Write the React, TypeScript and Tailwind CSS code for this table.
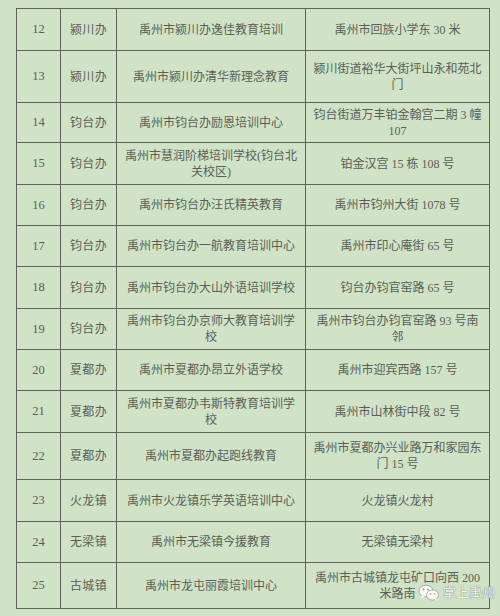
import React from 'react';

type Row = { no: string; area: string; name: string[]; addr: string[]; h: number };

const rows: Row[] = [
  { no: '12', area: '颍川办', name: ['禹州市颍川办逸佳教育培训'], addr: ['禹州市回族小学东 30 米'], h: 42 },
  { no: '13', area: '颍川办', name: ['禹州市颍川办清华新理念教育'], addr: ['颍川街道裕华大街坪山永和苑北', '门'], h: 52 },
  { no: '14', area: '钧台办', name: ['禹州市钧台办励恩培训中心'], addr: ['钧台街道万丰铂金翰宫二期 3 幢', '107'], h: 40 },
  { no: '15', area: '钧台办', name: ['禹州市慧润阶梯培训学校(钧台北', '关校区)'], addr: ['铂金汉宫 15 栋 108 号'], h: 42 },
  { no: '16', area: '钧台办', name: ['禹州市钧台办汪氏精英教育'], addr: ['禹州市钧州大街 1078 号'], h: 41 },
  { no: '17', area: '钧台办', name: ['禹州市钧台办一航教育培训中心'], addr: ['禹州市印心庵街 65 号'], h: 41 },
  { no: '18', area: '钧台办', name: ['禹州市钧台办大山外语培训学校'], addr: ['钧台办钧官窑路 65 号'], h: 42 },
  { no: '19', area: '钧台办', name: ['禹州市钧台办京师大教育培训学', '校'], addr: ['禹州市钧台办钧官窑路 93 号南', '邻'], h: 41 },
  { no: '20', area: '夏都办', name: ['禹州市夏都办昂立外语学校'], addr: ['禹州市迎宾西路 157 号'], h: 41 },
  { no: '21', area: '夏都办', name: ['禹州市夏都办韦斯特教育培训学', '校'], addr: ['禹州市山林街中段 82 号'], h: 42 },
  { no: '22', area: '夏都办', name: ['禹州市夏都办起跑线教育'], addr: ['禹州市夏都办兴业路万和家园东', '门 15 号'], h: 47 },
  { no: '23', area: '火龙镇', name: ['禹州市火龙镇乐学英语培训中心'], addr: ['火龙镇火龙村'], h: 42 },
  { no: '24', area: '无梁镇', name: ['禹州市无梁镇今援教育'], addr: ['无梁镇无梁村'], h: 41 },
  { no: '25', area: '古城镇', name: ['禹州市龙屯丽霞培训中心'], addr: ['禹州市古城镇龙屯矿口向西 200', '米路南'], h: 46 },
];

const cell = 'border border-[#5f625c] text-center align-middle p-0';

function Lines({ lines }: { lines: string[] }) {
  return (
    <div className="flex flex-col items-center leading-[16px]">
      {lines.map((l, i) => (
        <span key={i} className="whitespace-nowrap">{l}</span>
      ))}
    </div>
  );
}

function WeChatMark() {
  return (
    <svg width="22" height="18" viewBox="0 0 22 18">
      <ellipse cx="8" cy="7" rx="7" ry="5.8" fill="#fafcf8" stroke="#9aa096" strokeWidth="0.8" />
      <path d="M4 11.5 L3 14.5 L7 12.5 Z" fill="#fafcf8" />
      <ellipse cx="14.5" cy="11" rx="6" ry="5" fill="#fafcf8" stroke="#9aa096" strokeWidth="0.8" />
      <path d="M17 15 L19 17.5 L18.5 14.5 Z" fill="#fafcf8" />
      <circle cx="5.5" cy="5.5" r="0.9" fill="#8c9288" />
      <circle cx="10" cy="5.5" r="0.9" fill="#8c9288" />
      <circle cx="12.5" cy="10" r="0.8" fill="#8c9288" />
      <circle cx="16.5" cy="10" r="0.8" fill="#8c9288" />
    </svg>
  );
}

export default function App() {
  return (
    <div
      className="relative w-[500px] h-[616px] bg-[#d0e3c7] pt-[8px] pl-[16px] text-[#5a5e57] text-[12px] overflow-hidden"
      style={{ fontFamily: '"Liberation Serif", "Noto Sans CJK SC", serif' }}
    >
      <table className="border-collapse table-fixed w-[473px]">
        <colgroup>
          <col className="w-[44px]" />
          <col className="w-[56px]" />
          <col className="w-[189px]" />
          <col className="w-[184px]" />
        </colgroup>
        <tbody>
          {rows.map((r) => (
            <tr key={r.no} style={{ height: r.h }}>
              <td className={`${cell} text-[12.5px]`}>{r.no}</td>
              <td className={`${cell} text-[12px] tracking-[0.3px]`}>{r.area}</td>
              <td className={cell}><Lines lines={r.name} /></td>
              <td className={cell}><Lines lines={r.addr} /></td>
            </tr>
          ))}
        </tbody>
      </table>

      {/* watermark */}
      <div className="absolute left-[418px] top-[583px] flex items-center gap-[3px]">
        <WeChatMark />
        <span className="text-[13px] text-[#f4f6f2] [text-shadow:0_0_1px_#7d8379,0_0_1px_#7d8379]">掌上禹州</span>
      </div>
    </div>
  );
}
